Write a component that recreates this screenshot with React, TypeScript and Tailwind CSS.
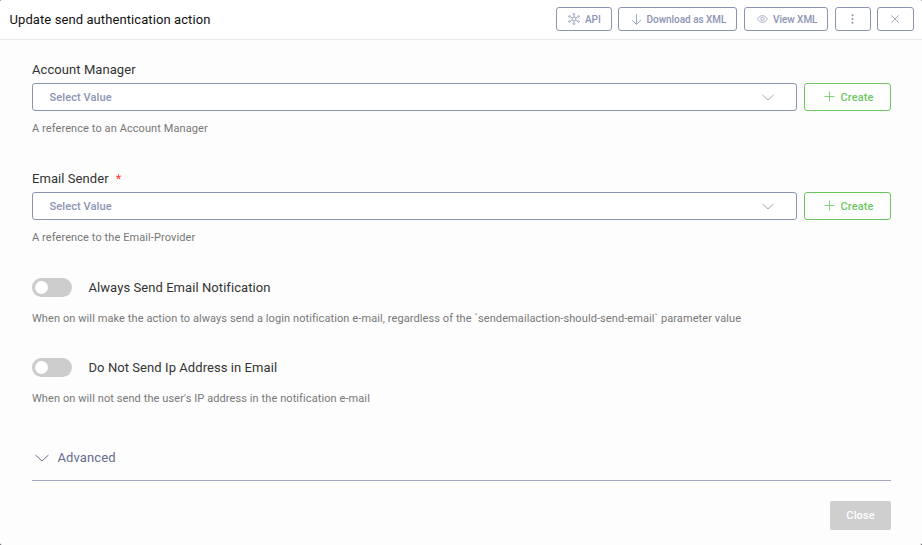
import React from "react";

const outline = "flex shrink-0 items-center rounded-[3px] border border-[#8c93b3] bg-white text-[#8c93b3]";

function Chevron({ className }: { className: string }) {
  return (
    <svg className={className} viewBox="0 0 14 8" fill="none" stroke="currentColor">
      <path d="M.5 1L7 7l6.500-6" vectorEffect="non-scaling-stroke" />
    </svg>
  );
}

function ApiIcon() {
  return (
    <svg className="h-3 w-3 shrink-0" viewBox="0 0 12 12" fill="none" stroke="currentColor" strokeWidth="0.75">
      <circle cx="6" cy="6" r="2" />
      <path d="M6 4V2M6 8v2M4.3 5L2.2 3.8M7.7 5l2.1-1.2M4.3 7L2.2 8.2M7.7 7l2.1 1.2" />
      <circle cx="6" cy="1.2" r="0.8" />
      <circle cx="6" cy="10.8" r="0.8" />
      <circle cx="1.4" cy="3.4" r="0.8" />
      <circle cx="10.6" cy="3.4" r="0.8" />
      <circle cx="1.4" cy="8.6" r="0.8" />
      <circle cx="10.6" cy="8.6" r="0.8" />
    </svg>
  );
}

function SelectField({ label, help, required }: { label: string; help: string; required?: boolean }) {
  return (
    <div className="flex h-[109px] w-[859px] flex-col">
      <div className="flex h-[23px] items-center pb-[3px] text-[13px] leading-[18px] tracking-[0.07px] text-[#333]">
        {label}
        {required && <span className="ml-[7px] text-[#f44336]">*</span>}
      </div>
      <div className="flex h-7 gap-[7px]">
        <button className={`${outline} w-[765px] justify-between pr-[22px] pl-[16.5px] text-[11px] font-medium tracking-[0.1px]`}>
          <span className="pt-[2px] leading-4">Select Value</span>
          <Chevron className="h-[7px] w-[12px] opacity-80" />
        </button>
        <button className="flex w-[87px] shrink-0 items-center rounded-[3px] border border-[#6cc763] bg-white pl-[18.5px] text-[11px] font-medium tracking-[0.1px] text-[#6cc763]">
          <svg className="mr-[6px] mb-px h-[11px] w-[11px]" viewBox="0 0 11 11" stroke="currentColor" strokeWidth="0.8">
            <path d="M5.5 .5v10M.5 5.5h10" />
          </svg>
          <span className="pt-[2px] leading-4">Create</span>
        </button>
      </div>
      <p className="mt-[10px] text-[11px] leading-4 tracking-[0.09px] text-[#777]">{help}</p>
    </div>
  );
}

function ToggleField({ label, help }: { label: string; help: string }) {
  return (
    <div className="h-20">
      <div className="flex h-[19px] items-center">
        <div className="flex h-[19px] w-10 items-center rounded-full bg-[#ccc] pl-[3px]">
          <div className="h-[13px] w-[13px] rounded-full bg-white" />
        </div>
        <span className="ml-[16.5px] text-[13px] tracking-[0.07px] text-[#333]">{label}</span>
      </div>
      <p className="mt-[14px] text-[11px] leading-4 tracking-[0.09px] text-[#777]">{help}</p>
    </div>
  );
}

export default function App() {
  return (
    <div className="bg-[#3b3b45]">
      <div className="flex h-[545px] w-[922px] flex-col overflow-hidden rounded-[2px] bg-[#fdfdfd] font-[Roboto,sans-serif]">
        <header className="flex h-10 shrink-0 items-start border-b border-[#e9e9e9] bg-white pt-[7px] pr-2 pl-[9.5px]">
          <h1 className="flex-1 text-[13px] leading-[25px] tracking-[0.09px] text-[#111]">Update send authentication action</h1>
          <div className="flex h-6 text-[10px] font-medium tracking-[-0.03px]">
            <button className={`${outline} w-14 pl-[11px]`}>
              <ApiIcon />
              <span className="ml-[5px] pt-px">API</span>
            </button>
            <button className={`${outline} ml-[6px] w-[119px] pl-3`}>
              <svg className="h-[11px] w-[11px]" viewBox="0 0 11 11" fill="none" stroke="currentColor" strokeWidth="0.8">
                <path d="M5.500 0v10.500M1 6l4.500 4.500L10 6" />
              </svg>
              <span className="ml-[4.5px] pt-px">Download as XML</span>
            </button>
            <button className={`${outline} ml-[7px] w-[84px] pl-3`}>
              <svg className="h-[8px] w-[11px]" viewBox="0 0 11 8" fill="none" stroke="currentColor" strokeWidth="0.7">
                <path d="M.4 4Q2.600.5 5.500.5T10.600 4Q8.400 7.500 5.500 7.500T.4 4Z" />
                <circle cx="5.5" cy="4" r="1.7" />
              </svg>
              <span className="ml-[5px] pt-px">View XML</span>
            </button>
            <button className={`${outline} ml-[7px] w-9 justify-center`} aria-label="More">
              <svg className="-ml-px h-[10px] w-[3px]" viewBox="0 0 3 10" fill="currentColor">
                <circle cx="1.5" cy="1.2" r="1" />
                <circle cx="1.5" cy="5" r="1" />
                <circle cx="1.5" cy="8.8" r="1" />
              </svg>
            </button>
            <button className={`${outline} ml-[6px] w-[37px] justify-center`} aria-label="Close dialog">
              <svg className="-ml-px h-2 w-2" viewBox="0 0 8 8" stroke="currentColor" strokeWidth="0.8">
                <path d="M.3.3l7.4 7.4M7.7.3L.3 7.7" />
              </svg>
            </button>
          </div>
        </header>
        <main className="px-8 pt-5">
          <SelectField label="Account Manager" help="A reference to an Account Manager" />
          <SelectField label="Email Sender" help="A reference to the Email-Provider" required />
          <ToggleField label="Always Send Email Notification" help="When on will make the action to always send a login notification e-mail, regardless of the `sendemailaction-should-send-email` parameter value" />
          <ToggleField label="Do Not Send Ip Address in Email" help="When on will not send the user's IP address in the notification e-mail" />
          <div className="mt-[2px] flex h-[41px] w-[859px] items-start border-b border-[#a3a8c0] pt-[9px] text-[#666c8d]">
            <Chevron className="mt-[5px] ml-[3px] h-2 w-[14px]" />
            <span className="ml-[8.5px] text-[13px] leading-[18px] tracking-[0.1px]">Advanced</span>
          </div>
          <div className="flex w-[859px] justify-end pt-5">
            <button className="h-[29px] w-[61px] rounded-[2px] bg-[#cfcfcf] pt-px text-[11px] font-medium tracking-[0.1px] text-white">Close</button>
          </div>
        </main>
      </div>
    </div>
  );
}
